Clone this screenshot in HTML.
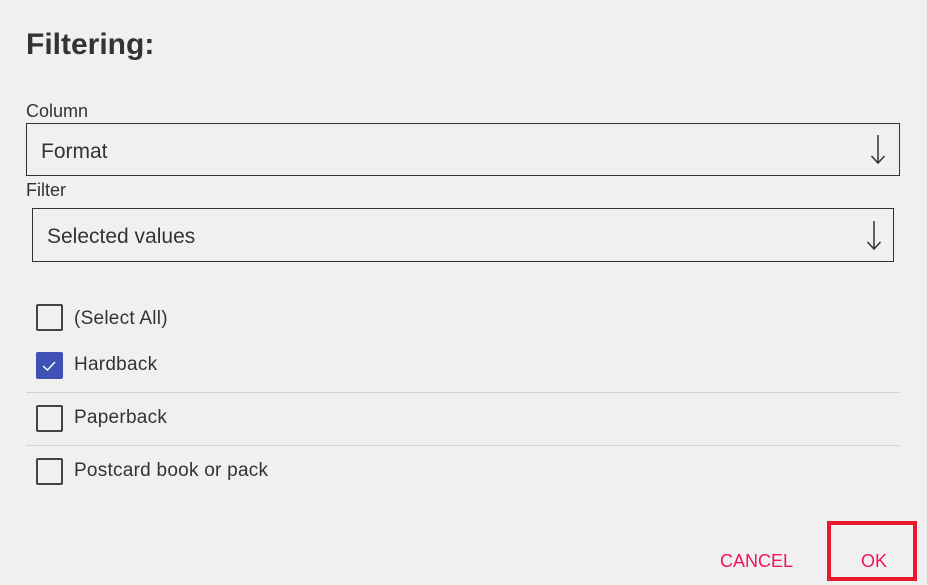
<!DOCTYPE html>
<html><head><style>
body{margin:0;width:927px;height:585px;background:#f0f0f0;font-family:"Liberation Sans",sans-serif;color:#333;position:relative;overflow:hidden}
.a{position:absolute}
.box{position:absolute;border:1.5px solid #333;box-sizing:border-box}
.cb{position:absolute;left:36px;width:27px;height:27px;border:2px solid #444;box-sizing:border-box;border-radius:2px}
.t{position:absolute;left:74px;font-size:19px;letter-spacing:0.25px}
.sep{position:absolute;left:26px;width:874px;height:1px;background:#d4d4d4}
</style></head><body>
<div class="a" style="left:26px;top:28px;font-size:30px;font-weight:bold;color:#333">Filtering:</div>
<div class="a" style="left:26px;top:101px;font-size:18px">Column</div>
<div class="box" style="left:26px;top:123px;width:874px;height:53px"></div>
<div class="a" style="left:41px;top:140px;font-size:21px">Format</div>
<svg class="a" style="left:870px;top:135px" width="16" height="30"><path d="M8 0V28M1.5 21L8 28L14.5 21" fill="none" stroke="#333" stroke-width="1.5"/></svg>
<div class="a" style="left:26px;top:180px;font-size:18px">Filter</div>
<div class="box" style="left:32px;top:208px;width:862px;height:54px"></div>
<div class="a" style="left:47px;top:225px;font-size:21px">Selected values</div>
<svg class="a" style="left:866px;top:221px" width="16" height="30"><path d="M8 0V28M1.5 21L8 28L14.5 21" fill="none" stroke="#333" stroke-width="1.5"/></svg>
<div class="cb" style="top:304px"></div><div class="t" style="top:308px">(Select All)</div>
<div class="cb" style="top:352px;background:#3f51b5;border-color:#3f51b5"><svg width="23" height="23" style="position:absolute;left:0;top:0"><path d="M5 12L9.5 16L17 8" fill="none" stroke="#fff" stroke-width="1.5"/></svg></div><div class="t" style="top:354px">Hardback</div>
<div class="sep" style="top:392px"></div>
<div class="cb" style="top:405px"></div><div class="t" style="top:407px">Paperback</div>
<div class="sep" style="top:445px"></div>
<div class="cb" style="top:458px"></div><div class="t" style="top:460px">Postcard book or pack</div>
<div class="a" style="left:720px;top:551px;font-size:18px;color:#f0145a">CANCEL</div>
<div class="a" style="left:827px;top:521px;width:90px;height:60px;border:4px solid #e8192c;box-sizing:border-box"></div>
<div class="a" style="left:861px;top:551px;font-size:18px;color:#f0145a">OK</div>
</body></html>
